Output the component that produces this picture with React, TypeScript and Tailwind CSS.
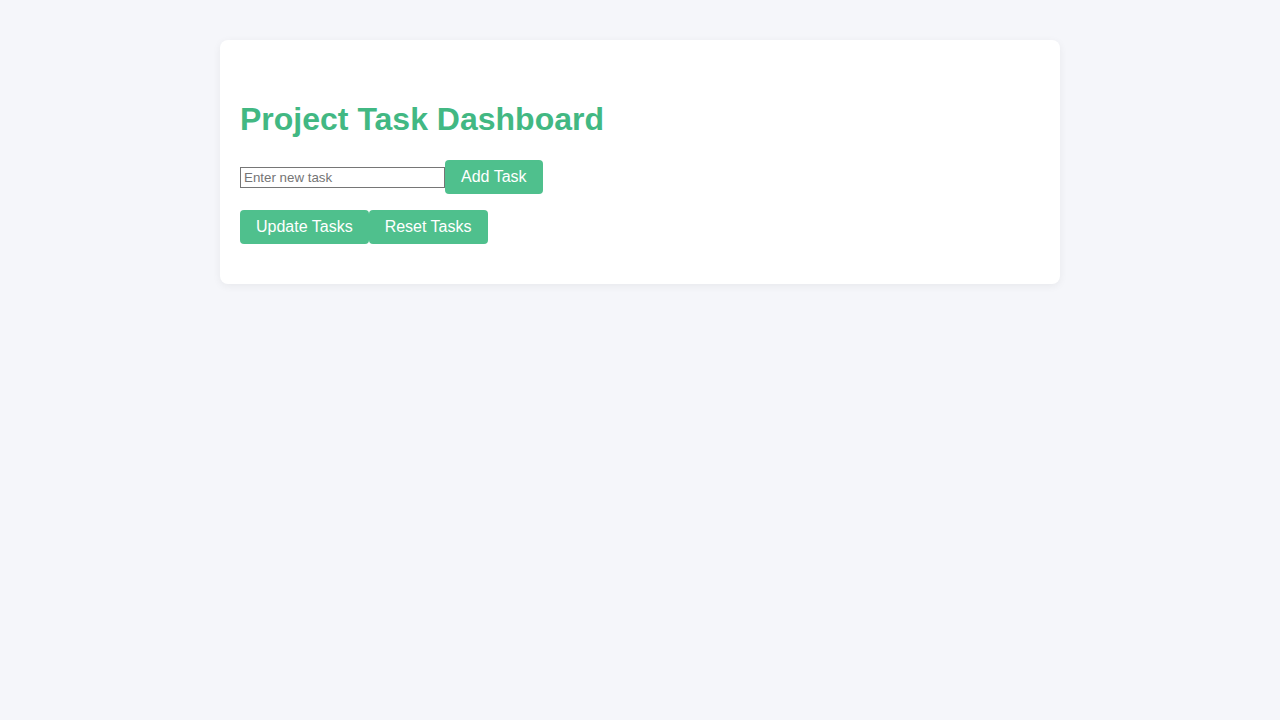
export default function App() {
  const btn =
    'inline-flex items-center justify-center h-[34px] px-4 rounded-[4px] bg-[#4fc08d] text-white text-[16px] leading-none';
  return (
    <div className="min-h-screen bg-[#f5f6fa] pt-10 font-['Liberation_Sans',Arial,sans-serif]">
      <div className="mx-auto w-[840px] rounded-lg bg-white px-5 pt-5 pb-10 shadow-[0_2px_8px_rgba(0,0,0,0.06)]">
        <div className="h-5" />
        <h1 className="mt-[21px] mb-[22px] text-[32px] font-bold leading-[37px] text-[#42b883]">
          Project Task Dashboard
        </h1>
        <div className="flex items-center">
          <input
            type="text"
            placeholder="Enter new task"
            className="h-[21px] w-[205px] border border-[#767676] px-[3px] text-[13.33px] text-black placeholder:text-[#757575] outline-none"
          />
          <button className={btn}>Add Task</button>
        </div>
        <div className="mt-4 flex">
          <button className={btn}>Update Tasks</button>
          <button className={btn}>Reset Tasks</button>
        </div>
      </div>
    </div>
  );
}
